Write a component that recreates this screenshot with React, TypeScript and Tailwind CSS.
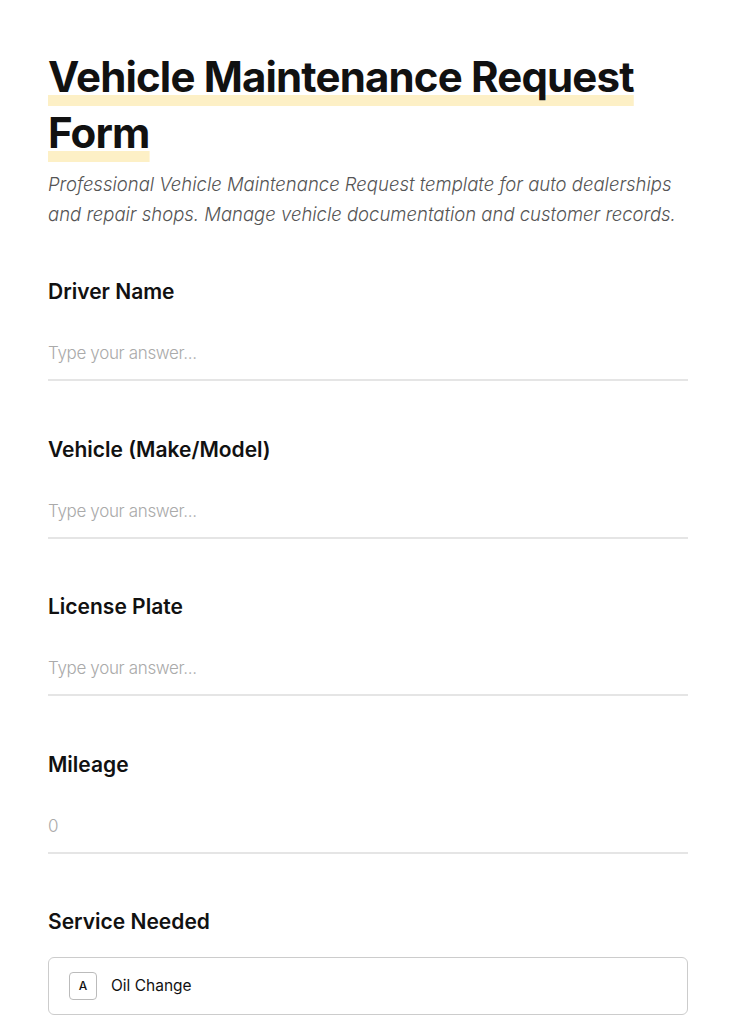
import React from "react";

const fields = [
  { label: "Driver Name", placeholder: "Type your answer..." },
  { label: "Vehicle (Make/Model)", placeholder: "Type your answer..." },
  { label: "License Plate", placeholder: "Type your answer..." },
  { label: "Mileage", placeholder: "0" },
];

export default function App() {
  return (
    <div className="min-h-screen bg-white px-12 pt-[49px] text-[#111] [font-family:Inter,'Open_Sans',sans-serif]">
      {/* Header */}
      <h1 className="text-[42px] font-bold leading-[56px] tracking-[-0.02em]">
        <span className="underline decoration-[#fdf0c6] decoration-[11px] underline-offset-[3px] [text-decoration-skip-ink:none]">
          Vehicle Maintenance Request Form
        </span>
      </h1>
      <p className="mt-2 text-[18.5px] font-light italic leading-[30px] text-[#555]">
        Professional Vehicle Maintenance Request template for auto dealerships and repair shops. Manage vehicle
        documentation and customer records.
      </p>

      {/* Text fields */}
      <div className="mt-[48px]">
        {fields.map((f) => (
          <div key={f.label} className="h-[157.5px]">
            <label className="block text-[21px] font-semibold leading-[30px]">{f.label}</label>
            <input
              placeholder={f.placeholder}
              className="mt-[33px] block w-full border-b-2 border-[#e5e5e5] pb-[13px] text-[17px] leading-[26px] tracking-[-0.02em] outline-none placeholder:text-[#aaa] placeholder:font-light"
            />
          </div>
        ))}
      </div>

      {/* Choice */}
      <div>
        <div className="text-[21px] font-semibold leading-[30px]">Service Needed</div>
        <div className="mt-[20px] flex h-[58px] items-center gap-[14px] rounded-md border border-[#ccc] px-5">
          <span className="flex h-[28px] w-[28px] items-center justify-center rounded border border-[#bbb] text-[12px] font-medium">
            A
          </span>
          <span className="text-[15.5px]">Oil Change</span>
        </div>
      </div>
    </div>
  );
}
